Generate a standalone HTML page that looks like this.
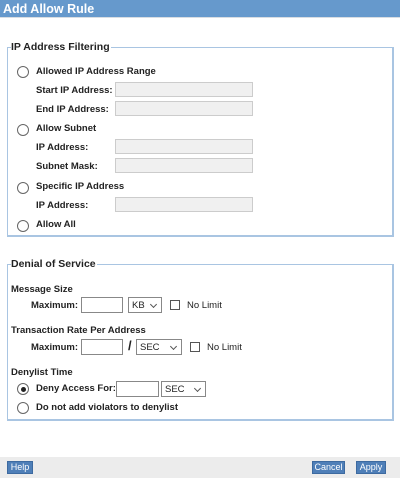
<!DOCTYPE html>
<html><head><style>
*{margin:0;padding:0;box-sizing:border-box}
body{width:400px;height:478px;position:relative;background:#fff;font-family:"Liberation Sans",Arial,sans-serif;font-size:9.5px;font-weight:bold;color:#222;overflow:hidden}
.a{position:absolute;white-space:nowrap;line-height:12px}
.hd{position:absolute;left:0;top:0;width:400px;height:18px;background:#6699cc;border-bottom:1px solid #d8dde2;color:#fff;font-size:12.5px;padding:2px 0 0 3px}
.fs{position:absolute;border:1px solid #a9c5e2;border-right-width:2px;border-bottom-width:2px}
.lg{position:absolute;background:#fff;font-size:10.5px;line-height:12px;padding-right:1px}
.rd{position:absolute;width:12px;height:12px;border:1px solid #666;border-radius:50%;background:#fff}
.rd.on::after{content:"";position:absolute;left:2.5px;top:2.5px;width:5px;height:5px;border-radius:50%;background:#222}
.in{position:absolute;height:15px;border:1px solid #ccc;background:#f0f0f0}
.tx{position:absolute;height:16px;border:1px solid #888;background:#fff}
.sel{position:absolute;height:16px;border:1px solid #888;background:#fff;font-size:9.5px;font-weight:normal;padding:2px 0 0 3px;line-height:11px}
.sel::after{content:"";position:absolute;right:5px;top:4px;width:4px;height:4px;border-right:1px solid #555;border-bottom:1px solid #555;transform:rotate(45deg)}
.cb{position:absolute;width:10px;height:10px;border:1px solid #555;background:#fff}
.nl{font-weight:normal}
.ft{position:absolute;left:0;top:457px;width:400px;height:21px;background:#ececec}
.bt{position:absolute;top:461px;height:13px;background:#4f7fb8;border:1px solid #3d6aa0;color:#fff;font-size:9px;line-height:11px;text-align:center;font-weight:normal}
</style></head><body>
<div class="hd">Add Allow Rule</div>

<div class="fs" style="left:7px;top:47px;width:387px;height:190px"></div>
<div class="lg" style="left:11px;top:41px">IP Address Filtering</div>
<div class="rd" style="left:17px;top:66px"></div><div class="a" style="left:36px;top:66px">Allowed IP Address Range</div>
<div class="a" style="left:36px;top:85px">Start IP Address:</div><div class="in" style="left:115px;top:82px;width:138px"></div>
<div class="a" style="left:36px;top:104px">End IP Address:</div><div class="in" style="left:115px;top:101px;width:138px"></div>
<div class="rd" style="left:17px;top:124px"></div><div class="a" style="left:36px;top:123px">Allow Subnet</div>
<div class="a" style="left:36px;top:142px">IP Address:</div><div class="in" style="left:115px;top:139px;width:138px"></div>
<div class="a" style="left:36px;top:161px">Subnet Mask:</div><div class="in" style="left:115px;top:158px;width:138px"></div>
<div class="rd" style="left:17px;top:182px"></div><div class="a" style="left:36px;top:181px">Specific IP Address</div>
<div class="a" style="left:36px;top:200px">IP Address:</div><div class="in" style="left:115px;top:197px;width:138px"></div>
<div class="rd" style="left:17px;top:220px"></div><div class="a" style="left:36px;top:219px">Allow All</div>

<div class="fs" style="left:7px;top:264px;width:387px;height:157px"></div>
<div class="lg" style="left:11px;top:258px">Denial of Service</div>
<div class="a" style="left:11px;top:284px">Message Size</div>
<div class="a" style="left:31px;top:300px">Maximum:</div><div class="tx" style="left:81px;top:297px;width:42px"></div>
<div class="sel" style="left:128px;top:297px;width:34px">KB</div>
<div class="cb" style="left:170px;top:300px"></div><div class="a nl" style="left:187px;top:300px">No Limit</div>
<div class="a" style="left:11px;top:325px">Transaction Rate Per Address</div>
<div class="a" style="left:31px;top:342px">Maximum:</div><div class="tx" style="left:81px;top:339px;width:42px"></div>
<div class="a" style="left:128px;top:340px;font-size:13px">/</div>
<div class="sel" style="left:136px;top:339px;width:46px">SEC</div>
<div class="cb" style="left:190px;top:342px"></div><div class="a nl" style="left:207px;top:342px">No Limit</div>
<div class="a" style="left:11px;top:367px">Denylist Time</div>
<div class="rd on" style="left:17px;top:383px"></div><div class="a" style="left:36px;top:383px">Deny Access For:</div>
<div class="tx" style="left:116px;top:381px;width:43px"></div>
<div class="sel" style="left:161px;top:381px;width:45px">SEC</div>
<div class="rd" style="left:17px;top:402px"></div><div class="a" style="left:36px;top:402px">Do not add violators to denylist</div>

<div class="ft"></div>
<div class="bt" style="left:7px;width:26px">Help</div>
<div class="bt" style="left:312px;width:33px">Cancel</div>
<div class="bt" style="left:356px;width:30px">Apply</div>
</body></html>
